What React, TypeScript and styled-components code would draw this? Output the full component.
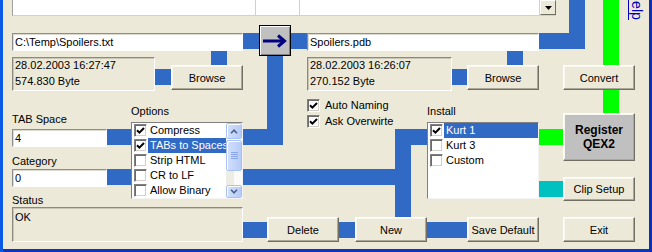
import styled, { createGlobalStyle, css } from 'styled-components'

const GlobalStyle = createGlobalStyle`
  *, *::before, *::after {
    box-sizing: border-box;
  }
  html, body {
    margin: 0;
    padding: 0;
    background: #ece9d8;
  }
  body {
    font-family: "Liberation Sans", Arial, sans-serif;
    font-size: 11px;
    color: #000;
  }
`

type Placed = { $area: string }

const placed = css<Placed>`
  grid-area: ${(p) => p.$area};
`

const sunken = css`
  border: 1px solid;
  border-color: #8d8a7d #ffffff #ffffff #8d8a7d;
  box-shadow: inset 1px 1px 0 #c9c6b8;
`

const BLUE = '#316ac5'
const GREEN = '#00ff00'
const CYAN = '#00c0c0'

// the pipe network that links the controls
const PIPES = [
  { x: 569, y: 0, w: 16, h: 49, c: BLUE },
  { x: 539, y: 33, w: 46, h: 16, c: BLUE },
  { x: 243, y: 33, w: 64, h: 16, c: BLUE },
  { x: 211, y: 51, w: 16, h: 14, c: BLUE },
  { x: 155, y: 69, w: 16, h: 16, c: BLUE },
  { x: 507, y: 51, w: 16, h: 14, c: BLUE },
  { x: 452, y: 69, w: 15, h: 16, c: BLUE },
  { x: 267, y: 56, w: 16, h: 89, c: BLUE },
  { x: 243, y: 129, w: 40, h: 16, c: BLUE },
  { x: 107, y: 129, w: 24, h: 16, c: BLUE },
  { x: 107, y: 169, w: 24, h: 16, c: BLUE },
  { x: 243, y: 169, w: 168, h: 16, c: BLUE },
  { x: 395, y: 129, w: 16, h: 88, c: BLUE },
  { x: 395, y: 129, w: 32, h: 16, c: BLUE },
  { x: 243, y: 222, w: 224, h: 16, c: BLUE },
  { x: 603, y: 0, w: 16, h: 113, c: GREEN },
  { x: 539, y: 129, w: 24, h: 16, c: GREEN },
  { x: 539, y: 181, w: 24, h: 16, c: CYAN },
]

const Dialog = styled.div`
  display: grid;
  width: 652px;
  height: 252px;
  overflow: hidden;
  background: #ece9d8;
  box-shadow: inset 3px 0 0 #0a5ae6, inset -3px 0 0 #0b2fb8, inset 0 -3px 0 #0b35c4;
  grid-template-columns:
    [x0] 12px [x12] 95px [x107] 24px [x131] 24px [x155] 16px [x171] 72px [x243] 16px
    [x259] 8px [x267] 24px [x291] 16px [x307] 32px [x339] 16px [x355] 72px [x427] 25px
    [x452] 15px [x467] 72px [x539] 17px [x556] 7px [x563] 63px [x626] 9px [x635] 7px
    [x642] 10px [x652];
  grid-template-rows:
    [y0] 16px [y16] 9px [y25] 8px [y33] 18px [y51] 5px [y56] 1px [y57] 8px [y65] 25px
    [y90] 1px [y91] 7px [y98] 7px [y105] 8px [y113] 9px [y122] 7px [y129] 18px [y147] 8px
    [y155] 6px [y161] 8px [y169] 8px [y177] 10px [y187] 7px [y194] 5px [y199] 2px [y201] 6px
    [y207] 10px [y217] 25px [y242] 10px [y252];
`

const PipeLayer = styled.svg`
  grid-area: y0 / x0 / y252 / x652;
  display: block;
`

const TopList = styled.div<Placed>`
  ${placed};
  display: flex;
  background: #fff;
  border-left: 1px solid #a0a0a0;
  border-bottom: 1px solid #d4d0c8;
`

const TopColumn = styled.div<{ $width?: number }>`
  ${(p) => (p.$width ? `width: ${p.$width}px; flex: none;` : 'flex: 1;')}
  border-right: 1px solid #d4d0c8;
`

const DropButton = styled.div`
  width: 16px;
  flex: none;
  display: grid;
  place-items: center;
  background: #ece9d8;
  border: 1px solid;
  border-color: #ffffff #716f64 #716f64 #ffffff;
`

const HelpLink = styled.div<Placed>`
  ${placed};
  justify-self: start;
  align-self: start;
  margin: -9px 0 0 2px;
  writing-mode: vertical-rl;
  font-size: 14px;
  line-height: 14px;
  color: #0000c0;
  border-left: 1px solid #0000c0;
  padding-left: 1px;
  white-space: nowrap;
`

const Field = styled.div<Placed>`
  ${placed};
  display: flex;
  align-items: center;
  padding-left: 2px;
  background: #fff;
  border: 1px solid;
  border-color: #8e8e8e #ffffff #ffffff #8e8e8e;
  box-shadow: inset 1px 1px 0 #dcdad0;
  white-space: nowrap;
`

const InfoBox = styled.div<Placed & { $padTop?: number }>`
  ${placed};
  ${sunken};
  padding: ${(p) => p.$padTop ?? 0}px 2px 0;
  line-height: 15.5px;
  white-space: pre;
`

const Button = styled.button<Placed & { $strong?: boolean }>`
  ${placed};
  margin: 0;
  padding: 0;
  font-family: "Liberation Sans", Arial, sans-serif;
  font-size: ${(p) => (p.$strong ? 12 : 11)}px;
  font-weight: ${(p) => (p.$strong ? 700 : 400)};
  line-height: 14px;
  color: #000;
  background: ${(p) => (p.$strong ? '#c0c0c0' : '#ece9d8')};
  border: 1px solid;
  border-color: #ffffff #716f64 #716f64 #ffffff;
  box-shadow: inset -1px -1px 0 #aca899, inset 1px 1px 0 #f7f6f0;
  outline: none;
`

const ArrowButton = styled.button<Placed>`
  ${placed};
  margin: 0;
  padding: 0;
  display: grid;
  place-items: center;
  background: #c0c0c0;
  border: 1px solid #000;
  box-shadow: inset 1px 1px 0 #fff, inset -1px -1px 0 #808080;
  outline: none;
`

const Label = styled.div<Placed>`
  ${placed};
  align-self: start;
  line-height: 13px;
  white-space: nowrap;
`

const ListBox = styled.div<Placed>`
  ${placed};
  display: flex;
  background: #fff;
  border: 1px solid;
  border-color: #808080 #f4f4f4 #f4f4f4 #808080;
  overflow: hidden;
`

const ListItems = styled.div`
  flex: 1;
  min-width: 0;
  display: flex;
  flex-direction: column;
`

const ListRow = styled.div`
  height: 15px;
  display: flex;
  align-items: center;
  padding-left: 2px;
`

const ItemText = styled.span<{ $selected?: boolean }>`
  flex: 1;
  min-width: 0;
  margin-left: 1px;
  padding-left: 2px;
  line-height: 15px;
  white-space: nowrap;
  overflow: hidden;
  background: ${(p) => (p.$selected ? '#316ac5' : 'transparent')};
  color: ${(p) => (p.$selected ? '#fff' : '#000')};
`

const CheckBox = styled.span`
  flex: none;
  width: 13px;
  height: 13px;
  display: grid;
  place-items: center;
  background: #fff;
  border: 1px solid;
  border-color: #808080 #ffffff #ffffff #808080;
  box-shadow: inset 1px 1px 0 #6b6b6b, inset -1px -1px 0 #d4d0c8;
`

const ScrollBar = styled.div`
  flex: none;
  width: 16px;
  display: flex;
  flex-direction: column;
  background: #fbfbf8;
`

const ScrollPart = styled.div<{ $height: number; $gap?: number }>`
  height: ${(p) => p.$height}px;
  margin-top: ${(p) => p.$gap ?? 0}px;
  flex: none;
  display: grid;
  place-items: center;
  border: 1px solid #a9c2f1;
  border-radius: 2px;
  background: linear-gradient(90deg, #d3e0fd, #b5cbf7);
  box-shadow: inset 1px 1px 0 #ffffff;
`

const ScrollTrack = styled.div`
  flex: 1;
  background: linear-gradient(90deg, #eeede5 50%, #fbfbf8 50%);
`

const CheckGroup = styled.div<Placed>`
  ${placed};
  display: flex;
  flex-direction: column;
  gap: 3px;
  padding-top: 1px;
`

const CheckRow = styled.div`
  height: 13px;
  display: flex;
  align-items: center;
  gap: 5px;
  line-height: 13px;
  white-space: nowrap;
`

function Check({ on }: { on?: boolean }) {
  return (
    <CheckBox>
      {on && (
        <svg width="9" height="9" viewBox="0 0 9 9">
          <path d="M1 4.2 L3.4 6.6 L8 2" fill="none" stroke="#000" strokeWidth="2" />
        </svg>
      )}
    </CheckBox>
  )
}

function Chevron({ up }: { up?: boolean }) {
  return (
    <svg width="8" height="5" viewBox="0 0 8 5">
      <path
        d={up ? 'M1 4.2 L4 1.2 L7 4.2' : 'M1 0.8 L4 3.8 L7 0.8'}
        fill="none"
        stroke="#4d6185"
        strokeWidth="1.6"
      />
    </svg>
  )
}

type Item = { label: string; checked?: boolean; selected?: boolean }

const OPTIONS: Item[] = [
  { label: 'Compress', checked: true },
  { label: 'TABs to Spaces', checked: true, selected: true },
  { label: 'Strip HTML' },
  { label: 'CR to LF' },
  { label: 'Allow Binary' },
]

const INSTALL: Item[] = [
  { label: 'Kurt 1', checked: true, selected: true },
  { label: 'Kurt 3' },
  { label: 'Custom' },
]

function CheckList({ area, items, scroll }: { area: string; items: Item[]; scroll?: boolean }) {
  return (
    <ListBox $area={area}>
      <ListItems>
        {items.map((it) => (
          <ListRow key={it.label}>
            <Check on={it.checked} />
            <ItemText $selected={it.selected}>{it.label}</ItemText>
          </ListRow>
        ))}
      </ListItems>
      {scroll && (
        <ScrollBar>
          <ScrollPart $height={16}>
            <Chevron up />
          </ScrollPart>
          <ScrollPart $height={31} $gap={1}>
            <svg width="7" height="8" viewBox="0 0 7 8">
              {[0, 2, 4, 6].map((y) => (
                <rect key={y} x="0" y={y} width="7" height="1" fill="#8aa8e8" />
              ))}
            </svg>
          </ScrollPart>
          <ScrollTrack />
          <ScrollPart $height={13}>
            <Chevron />
          </ScrollPart>
        </ScrollBar>
      )}
    </ListBox>
  )
}

export default function App() {
  return (
    <>
      <GlobalStyle />
      <Dialog>
        <PipeLayer width={652} height={252} viewBox="0 0 652 252">
          {PIPES.map((p, i) => (
            <rect key={i} x={p.x} y={p.y} width={p.w} height={p.h} fill={p.c} />
          ))}
        </PipeLayer>

        <TopList $area="y0 / x12 / y16 / x556">
          <TopColumn $width={243} />
          <TopColumn $width={44} />
          <TopColumn />
          <DropButton>
            <svg width="7" height="4" viewBox="0 0 7 4">
              <path d="M0 0 H7 L3.5 4 Z" fill="#000" />
            </svg>
          </DropButton>
        </TopList>
        <HelpLink $area="y0 / x626 / y25 / x652">Help</HelpLink>

        <Field $area="y33 / x12 / y51 / x243">C:\Temp\Spoilers.txt</Field>
        <ArrowButton $area="y25 / x259 / y56 / x291">
          <svg width="24" height="14" viewBox="0 0 24 14">
            <line x1="0" y1="7" x2="21" y2="7" stroke="#000080" strokeWidth="3" />
            <polyline points="15,1.5 21.5,7 15,12.5" fill="none" stroke="#000080" strokeWidth="3" />
          </svg>
        </ArrowButton>
        <Field $area="y33 / x307 / y51 / x539">Spoilers.pdb</Field>

        <InfoBox $area="y57 / x12 / y91 / x155">{'28.02.2003 16:27:47\n574.830 Byte'}</InfoBox>
        <Button $area="y65 / x171 / y90 / x243">Browse</Button>
        <InfoBox $area="y57 / x307 / y91 / x452">{'28.02.2003 16:26:07\n270.152 Byte'}</InfoBox>
        <Button $area="y65 / x467 / y90 / x539">Browse</Button>
        <Button $area="y65 / x563 / y90 / x635">Convert</Button>

        <CheckGroup $area="y98 / x307 / y129 / x427">
          <CheckRow>
            <Check on />
            Auto Naming
          </CheckRow>
          <CheckRow>
            <Check on />
            Ask Overwirte
          </CheckRow>
        </CheckGroup>

        <Label $area="y113 / x12 / y129 / x107">TAB Space</Label>
        <Field $area="y129 / x12 / y147 / x107">4</Field>
        <Label $area="y155 / x12 / y169 / x107">Category</Label>
        <Field $area="y169 / x12 / y187 / x107">0</Field>
        <Label $area="y194 / x12 / y207 / x243">Status</Label>
        <InfoBox $area="y207 / x12 / y242 / x243" $padTop={2}>OK</InfoBox>

        <Label $area="y105 / x131 / y122 / x243">Options</Label>
        <CheckList area="y122 / x131 / y199 / x243" items={OPTIONS} scroll />
        <Label $area="y105 / x427 / y122 / x539">Install</Label>
        <CheckList area="y122 / x427 / y199 / x539" items={INSTALL} />

        <Button $area="y113 / x563 / y161 / x635" $strong>
          Register
          <br />
          QEX2
        </Button>
        <Button $area="y177 / x563 / y201 / x635">Clip Setup</Button>

        <Button $area="y217 / x267 / y242 / x339">Delete</Button>
        <Button $area="y217 / x355 / y242 / x427">New</Button>
        <Button $area="y217 / x467 / y242 / x539">Save Default</Button>
        <Button $area="y217 / x563 / y242 / x635">Exit</Button>
      </Dialog>
    </>
  )
}
